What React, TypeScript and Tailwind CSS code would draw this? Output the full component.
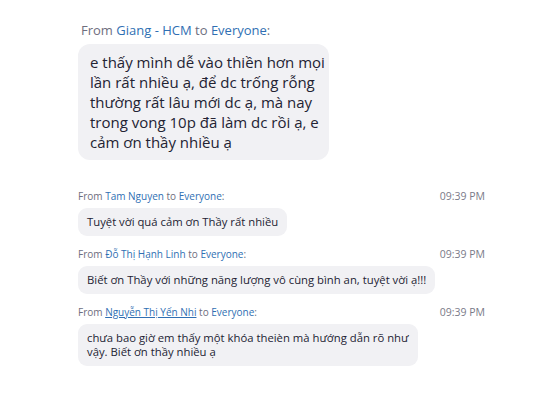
import React from 'react';

type Msg = {
    name: string;
    time: string;
    lines: string[];
    underline?: boolean;
};

const messages: Msg[] = [
    { name: 'Tam Nguyen', time: '09:39 PM', lines: ['Tuyệt vời quá cảm ơn Thầy rất nhiều'] },
    { name: 'Đỗ Thị Hạnh Linh', time: '09:39 PM', lines: ['Biết ơn Thầy với những năng lượng vô cùng bình an, tuyệt vời ạ!!!'] },
    {
        name: 'Nguyễn Thị Yến Nhi',
        time: '09:39 PM',
        underline: true,
        lines: ['chưa bao giờ em thấy một khóa theièn mà hướng dẫn rõ như', 'vậy. Biết ơn thầy nhiều ạ'],
    },
];

const ChatRow = ({ msg }: { msg: Msg }) => (
    <div className="flex flex-col">
        <div className="flex items-center justify-between text-[10px] leading-[14px]">
            <span className="text-[#6e6e7e]">
                From{' '}
                <span className={msg.underline ? 'text-[#2f6fb3] underline' : 'text-[#2f6fb3]'}>{msg.name}</span>{' '}
                to <span className="text-[#2f6fb3]">Everyone</span>:
            </span>
            <span className="text-[#7a7a88] text-[10.5px]">{msg.time}</span>
        </div>
        <div className="self-start mt-[5px] bg-[#f1f1f4] rounded-[9px] px-[9px] py-[7px] text-[11.3px] leading-[14px] text-[#232333] whitespace-nowrap">
            {msg.lines.map((l, i) => (
                <div key={i}>{l}</div>
            ))}
        </div>
    </div>
);

export default function App() {
    return (
        <div className="w-[533px] h-[400px] bg-white overflow-hidden" style={{ fontFamily: '"Open Sans", "Noto Sans", sans-serif' }}>
            <div className="pl-[78px] pt-[22px] w-[485px]">
                <div className="text-[13px] leading-[16px] pl-[3px] text-[#6e6e7e]">
                    From <span className="text-[#2f6fb3]">Giang - HCM</span> to <span className="text-[#2f6fb3]">Everyone</span>:
                </div>
                <div className="mt-[6px] w-[251px] bg-[#f1f1f4] rounded-[12px] pl-[12px] py-[8px] text-[15px] leading-[20px] text-[#232333] whitespace-nowrap">
                    <div>e thấy mình dễ vào thiền hơn mọi</div>
                    <div>lần rất nhiều ạ, để dc trống rỗng</div>
                    <div>thường rất lâu mới dc ạ, mà nay</div>
                    <div>trong vong 10p đã làm dc rồi ạ, e</div>
                    <div>cảm ơn thầy nhiều ạ</div>
                </div>
                <div className="mt-[29px] flex flex-col gap-[11px]">
                    {messages.map((m, i) => (
                        <ChatRow key={i} msg={m} />
                    ))}
                </div>
            </div>
        </div>
    );
}
